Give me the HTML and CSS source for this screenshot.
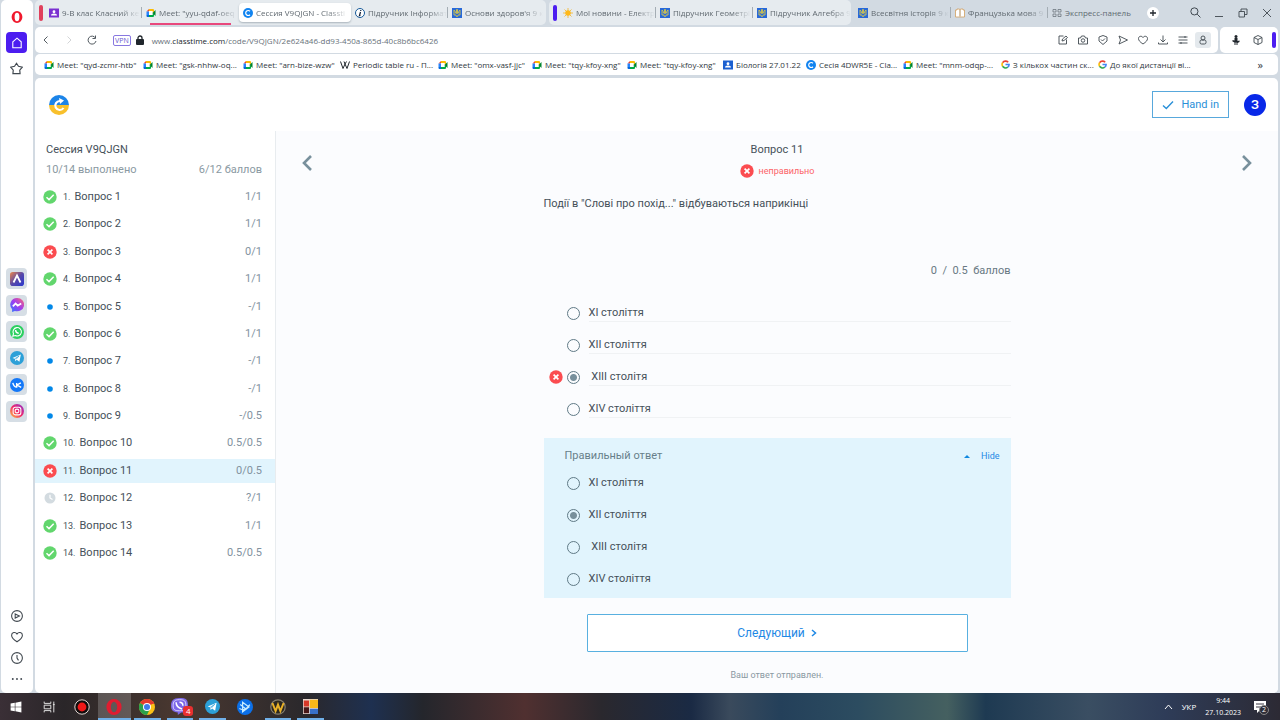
FILE: index.html
```html
<!DOCTYPE html>
<html lang="ru">
<head>
<meta charset="utf-8">
<title>Сессия V9QJGN - Classtime</title>
<link rel="stylesheet" href="styles.css">
</head>
<body>
<svg class="sprite" aria-hidden="true">
  <defs>
    <linearGradient id="g-msg" x1="0" y1="1" x2="1" y2="0"><stop offset="0" stop-color="#2a7bff"/><stop offset=".5" stop-color="#a03cf0"/><stop offset="1" stop-color="#ff6a70"/></linearGradient>
    <linearGradient id="g-insta" x1="0" y1="1" x2="1" y2="0"><stop offset="0" stop-color="#ffc83c"/><stop offset=".5" stop-color="#f0286c"/><stop offset="1" stop-color="#8a32d0"/></linearGradient>
    <linearGradient id="g-aria" x1="0" y1="0" x2="1" y2="1"><stop offset="0" stop-color="#f08848"/><stop offset=".5" stop-color="#5848a8"/><stop offset="1" stop-color="#2838d0"/></linearGradient>
  </defs>
  <symbol id="meet" viewBox="0 0 20 20"><path d="M1 7l5-5v5z" fill="#ea4335"/><path d="M6 2h8q2 0 2 2v4l-3 2V6H6z" fill="#fbbc04"/><path d="M1 7h5v7H1z" fill="#2684fc"/><path d="M1 14h5v4H3q-2 0-2-2z" fill="#0066da"/><path d="M6 14h7v-4l3 2v4q0 2-2 2H6z" fill="#00ac47"/><path d="M6 6h7v8H6z" fill="#fff"/><path d="M13 10l6-6v12z" fill="#00832d"/></symbol>
  <symbol id="trident" viewBox="0 0 20 20"><path d="M0 0h20v20H0z" fill="#2869d8"/><path d="M4 4v10h4q0 3 2 4 2-1 2-4h4V4q-3 2-3 6l-2 1V3L10 2 9 3v8l-2-1q0-4-3-6z" fill="none" stroke="#d4c44c" stroke-width="1.8"/></symbol>
  <symbol id="person" viewBox="0 0 20 20"><path d="M0 1h20v18H0z" fill="currentColor"/><circle cx="10" cy="7.500" r="2.800" fill="#fff"/><path d="M4 15q0-4 6-4t6 4z" fill="#fff"/></symbol>
  <symbol id="classtime" viewBox="0 0 20 20"><circle cx="10" cy="10" r="10" fill="#1284f0"/><path d="M14 6.500a5 5 0 1 0 0 7" fill="none" stroke="#fff" stroke-width="2.400"/></symbol>
  <symbol id="google" viewBox="0 0 20 20" fill="none" stroke-width="3.500"><path d="M16 5A8 8 0 0 0 3.500 6" stroke="#ea4335"/><path d="M3.500 6a8 8 0 0 0 0 8" stroke="#fbbc04"/><path d="M3.500 14a8 8 0 0 0 11.500 2" stroke="#34a853"/><path d="M15 16q3-2 3-6h-8" stroke="#4285f4"/></symbol>
  <symbol id="ok" viewBox="0 0 14 14"><circle cx="7" cy="7" r="6.700" fill="#62d66d"/><path d="M3.500 7.300l2.500 2.300 4.700-4.800" fill="none" stroke="#fff" stroke-width="1.500"/></symbol>
  <symbol id="bad" viewBox="0 0 14 14"><circle cx="7" cy="7" r="6.700" fill="#fb4c50"/><path d="M4.600 4.600l4.800 4.800M9.400 4.600L4.600 9.400" fill="none" stroke="#fff" stroke-width="1.700"/></symbol>
  <symbol id="dot" viewBox="0 0 14 14"><circle cx="7" cy="7" r="2.800" fill="#0288e8"/></symbol>
  <symbol id="wait" viewBox="0 0 14 14"><circle cx="7" cy="7" r="5.500" fill="#d3dbe0"/><path d="M7 3.800V7l2.500 1.500" fill="none" stroke="#fff" stroke-width="1.200"/></symbol>
  <symbol id="heart" viewBox="0 0 20 20"><path d="M10 18C4 14 1 11 1 7 1 2 7.500 1 10 5c2.500-4 9-3 9 2 0 4-3 7-9 11z"/></symbol>
  <symbol id="telegram" viewBox="0 0 20 20"><circle cx="10" cy="10" r="10" fill="#2ca0d8"/><path d="M3.500 10l12-5-2 10.500-4-3-2 2-.5-3.500z" fill="#fff"/><path d="M7 11l6-4-4.500 5" fill="none" stroke="#2ca0d8"/></symbol>
</svg>

<div class="browser">
  <nav class="dock" aria-label="Opera">
    <button class="dock-btn" aria-label="Opera"><svg width="12" height="12" viewBox="0 0 20 20"><path fill-rule="evenodd" d="M10 0a9 10 0 0 1 0 20a9 10 0 0 1 0-20zM10 3a4 7 0 0 0 0 14a4 7 0 0 0 0-14z" fill="#f0182c"/></svg></button>
    <button class="dock-btn dock-home" aria-label="Home"><svg class="line" width="12" height="12" viewBox="0 0 20 20"><path d="M3 8l7-6 7 6v10H3z"/></svg></button>
    <button class="dock-btn" aria-label="Pinboards"><svg class="line" width="13" height="13" viewBox="0 0 20 20"><path d="M10 2l3 4.500 6 1.500-4 4.500.5 5.500H4.500l.5-5.500L1 8l6-1.500z"/></svg></button>
    <div class="dock-apps">
      <button class="dock-btn dock-app" aria-label="Aria"><svg width="14" height="14" viewBox="0 0 20 20"><rect width="20" height="20" rx="4" fill="url(#g-aria)"/><path d="M5 15l5-10 5 10" fill="none" stroke="#fff" stroke-width="2.500"/></svg></button>
      <button class="dock-btn dock-app" aria-label="Messenger"><svg width="14" height="14" viewBox="0 0 20 20"><path d="M10 0a10 9.500 0 1 1-3 18.500L3 20v-4A9.500 9.500 0 0 1 10 0z" fill="url(#g-msg)"/><path d="M4 12l4-4 3 3 5-3" fill="none" stroke="#fff" stroke-width="2.500"/></svg></button>
      <button class="dock-btn dock-app" aria-label="WhatsApp"><svg width="14" height="14" viewBox="0 0 20 20"><circle cx="10" cy="10" r="10" fill="#2cd060"/><path d="M4 16l1-3.500A6 6 0 1 1 7.500 15z" fill="none" stroke="#fff" stroke-width="1.500"/><path d="M8 7q0 4 4.500 5" fill="none" stroke="#fff" stroke-width="2"/></svg></button>
      <button class="dock-btn dock-app" aria-label="Telegram"><svg width="14" height="14"><use href="#telegram"/></svg></button>
      <button class="dock-btn dock-app" aria-label="VK"><svg width="14" height="14" viewBox="0 0 20 20"><circle cx="10" cy="10" r="10" fill="#1478f8"/><path d="M4 7q1.500 6 5.500 6V7M15.500 7L10 10l6 3.500" fill="none" stroke="#fff" stroke-width="2"/></svg></button>
      <button class="dock-btn dock-app" aria-label="Instagram"><svg width="14" height="14" viewBox="0 0 20 20"><circle cx="10" cy="10" r="10" fill="url(#g-insta)"/><rect x="4.500" y="4.500" width="11" height="11" rx="3" fill="none" stroke="#fff" stroke-width="1.500"/><circle cx="10" cy="10" r="2.700" fill="none" stroke="#fff" stroke-width="1.500"/></svg></button>
    </div>
    <div class="dock-foot">
      <button class="dock-foot-btn" aria-label="Player"><svg class="line" width="12" height="12" viewBox="0 0 20 20"><circle cx="10" cy="10" r="9"/><path d="M7 6.500l7 3.500-7 3.500z"/></svg></button>
      <button class="dock-foot-btn" aria-label="Favorites"><svg class="line" width="12" height="12"><use href="#heart"/></svg></button>
      <button class="dock-foot-btn" aria-label="History"><svg class="line" width="12" height="12" viewBox="0 0 20 20"><circle cx="10" cy="10" r="9"/><path d="M10 5v5l2.500 4"/></svg></button>
      <button class="dock-foot-btn" aria-label="More"><svg width="12" height="12" viewBox="0 0 20 20" fill="#404850"><circle cx="3" cy="10" r="1.600"/><circle cx="10" cy="10" r="1.600"/><circle cx="17" cy="10" r="1.600"/></svg></button>
    </div>
  </nav>

  <div class="window">
    <div class="tabs">
      <div class="island">
        <span class="island-mark island-mark-red"></span>
        <button class="tab"><svg class="fav purple"><use href="#person"/></svg><span class="tab-name">9-В клас Класний ке</span></button>
        <button class="tab tab-alert"><svg class="fav"><use href="#meet"/></svg><span class="tab-name">Meet: "yyu-qdaf-oeq</span></button>
        <button class="tab tab-active"><svg class="fav"><use href="#classtime"/></svg><span class="tab-name">Сессия V9QJGN - Classti</span></button>
        <button class="tab"><svg class="fav" viewBox="0 0 20 20"><circle cx="10" cy="10" r="9" fill="#fff" stroke="#145898" stroke-width="2"/><path d="M11 8l-2 7 2-1M11.500 4v2" fill="none" stroke="#102038" stroke-width="2.500"/></svg><span class="tab-name">Підручник Інформат</span></button>
        <button class="tab tab-last"><svg class="fav"><use href="#trident"/></svg><span class="tab-name">Основи здоров'я 9 к</span></button>
      </div>
      <div class="island">
        <span class="island-mark island-mark-violet"></span>
        <button class="tab"><svg class="fav" viewBox="0 0 20 20"><path d="M10 0v20M0 10h20M3 3l14 14M17 3L3 17" stroke="#f0c050" stroke-width="2"/><circle cx="10" cy="10" r="5.500" fill="#ffb818"/></svg><span class="tab-name">Мої новини - Електр</span></button>
        <button class="tab"><svg class="fav"><use href="#trident"/></svg><span class="tab-name">Підручник Геометрі</span></button>
        <button class="tab tab-last"><svg class="fav"><use href="#trident"/></svg><span class="tab-name">Підручник Алгебра 9</span></button>
      </div>
      <div class="loose">
        <button class="tab"><svg class="fav"><use href="#trident"/></svg><span class="tab-name">Всесвітня історія 9 к</span></button>
        <button class="tab"><svg class="fav" viewBox="0 0 20 20"><path d="M1 4h3V2h5l1 2 1-2h5v2h3v14H1z" fill="#fff" stroke="#d0a060" stroke-width="1.600"/><path d="M10 4v13" stroke="#b08850" stroke-width="2"/></svg><span class="tab-name">Французька мова 9</span></button>
        <button class="tab tab-last"><svg class="fav" viewBox="0 0 20 20"><path d="M2 3h6v5H2zM12 3h6v5h-6zM2 12h6v5H2zM12 12h6v5h-6z" fill="none" stroke="#68727a" stroke-width="1.500"/></svg><span class="tab-name tab-whole">Экспресс-панель</span></button>
      </div>
      <button class="new-tab" aria-label="New tab"><svg width="8" height="8" viewBox="0 0 8 8"><path d="M4 1v6M1 4h6" stroke="#20262c" stroke-width="1.300"/></svg></button>
      <div class="win-controls">
        <button class="icon-btn" aria-label="Search"><svg class="line" width="11" height="11" viewBox="0 0 20 20"><circle cx="8" cy="8" r="6.500"/><path d="M13 13l6 6"/></svg></button>
        <button class="icon-btn" aria-label="Minimize"><svg class="line" width="10" height="11" viewBox="0 0 20 20"><path d="M2 18h16"/></svg></button>
        <button class="icon-btn" aria-label="Restore"><svg class="line" width="10" height="10" viewBox="0 0 20 20"><path d="M2 7h11v11H2zM6 7V2h12v11h-5"/></svg></button>
        <button class="icon-btn" aria-label="Close"><svg class="line" width="10" height="10" viewBox="0 0 20 20"><path d="M2 2l16 16M18 2L2 18"/></svg></button>
      </div>
    </div>

    <div class="toolbar">
      <div class="address">
        <button class="nav-btn" aria-label="Back"><svg class="line" width="10" height="10" viewBox="0 0 20 20"><path d="M13 3l-7 7 7 7"/></svg></button>
        <button class="nav-btn nav-off" aria-label="Forward"><svg class="line" width="10" height="10" viewBox="0 0 20 20"><path d="M7 3l7 7-7 7"/></svg></button>
        <button class="nav-btn" aria-label="Reload"><svg class="line" width="10" height="10" viewBox="0 0 20 20"><path d="M17 6A8 8 0 1 0 18 12M17 1v6h-6"/></svg></button>
        <span class="vpn">VPN</span>
        <svg width="8" height="10" viewBox="0 0 8 10"><path d="M2 5V3a2 2 0 0 1 4 0v2" fill="none" stroke="#20262c" stroke-width="1.300"/><rect y="4" width="8" height="6" rx="1" fill="#20262c"/></svg>
        <span class="url">www.<b>classtime.com</b>/code/V9QJGN/2e624a46-dd93-450a-865d-40c8b6bc6426</span>
        <div class="tools">
          <button class="tool" aria-label="Edit"><svg class="line" width="10" height="10" viewBox="0 0 20 20"><path d="M11 2H2v16h15V9M8 12l1-4 7-6 3 3-7 6z"/></svg></button>
          <button class="tool" aria-label="Snapshot"><svg class="line" width="10" height="10" viewBox="0 0 20 20"><path d="M1 6h4l2-4h6l2 4h4v12H1z"/><circle cx="10" cy="11" r="3.500"/></svg></button>
          <button class="tool" aria-label="Shield"><svg class="line" width="10" height="10" viewBox="0 0 20 20"><path d="M10 1l8 3v8l-8 7-8-7V4zM6 9l3 3 5-5"/></svg></button>
          <button class="tool" aria-label="Flow"><svg class="line" width="10" height="10" viewBox="0 0 20 20"><path d="M2 2l17 8-17 8 3-8z"/></svg></button>
          <button class="tool" aria-label="Favorite"><svg class="line" width="10" height="10"><use href="#heart"/></svg></button>
          <button class="tool" aria-label="Downloads"><svg class="line" width="10" height="10" viewBox="0 0 20 20"><path d="M10 1v12M5 9l5 5 5-5M1 15v3h18v-3"/></svg></button>
          <button class="tool" aria-label="Setup"><svg class="line" width="10" height="10" viewBox="0 0 20 20"><path d="M1 4h18M1 10h18M1 16h18M14 2v4M6 14v4"/></svg></button>
          <button class="tool tool-on" aria-label="Profile"><svg class="line" width="10" height="10" viewBox="0 0 20 20"><circle cx="10" cy="6" r="4"/><rect x="4" y="10" width="12" height="8" rx="3"/></svg></button>
        </div>
      </div>
      <div class="extensions">
        <button class="tool" aria-label="Assistant"><svg width="10" height="10" viewBox="0 0 20 20"><circle cx="10" cy="3" r="3" fill="#20262c"/><path d="M7 6h6v6l4-1v3l-4 2v4h-2v-5H9v5H7v-5l-4-2v-3l4 1z" fill="#20262c"/></svg></button>
        <button class="tool" aria-label="Extensions"><svg class="line" width="10" height="10" viewBox="0 0 20 20"><path d="M2 5l8-4 8 4v10l-8 4-8-4zM2 5l8 4 8-4M10 9v10"/></svg></button>
        <span class="ext-mark"></span>
      </div>
    </div>

    <div class="bookmarks">
      <a class="bm" href="#"><svg class="fav"><use href="#meet"/></svg>Meet: "qyd-zcmr-htb"</a>
      <a class="bm" href="#"><svg class="fav"><use href="#meet"/></svg>Meet: "gsk-nhhw-oq...</a>
      <a class="bm" href="#"><svg class="fav"><use href="#meet"/></svg>Meet: "arn-bize-wzw"</a>
      <a class="bm" href="#"><svg class="fav" viewBox="0 0 20 20"><path d="M1 3l5 14 4-9 4 9 5-14M8 3l2 5 3-5" fill="none" stroke="#20262c" stroke-width="2"/></svg>Periodic table ru - П...</a>
      <a class="bm" href="#"><svg class="fav"><use href="#meet"/></svg>Meet: "omx-vasf-jjc"</a>
      <a class="bm" href="#"><svg class="fav"><use href="#meet"/></svg>Meet: "tqy-kfoy-xng"</a>
      <a class="bm" href="#"><svg class="fav"><use href="#meet"/></svg>Meet: "tqy-kfoy-xng"</a>
      <a class="bm" href="#"><svg class="fav blue"><use href="#person"/></svg>Біологія 27.01.22</a>
      <a class="bm" href="#"><svg class="fav"><use href="#classtime"/></svg>Сесія 4DWR5E - Cla...</a>
      <a class="bm" href="#"><svg class="fav"><use href="#meet"/></svg>Meet: "mnm-odqp-...</a>
      <a class="bm" href="#"><svg class="fav fav-small" viewBox="0 0 20 20"><use href="#google"/></svg>З кількох частин ск...</a>
      <a class="bm" href="#"><svg class="fav fav-small" viewBox="0 0 20 20"><use href="#google"/></svg>До якої дистанції ві...</a>
      <button class="bm-more" aria-label="More bookmarks">»</button>
    </div>

    <div class="page">
      <header class="page-head">
        <svg width="20" height="20" viewBox="0 0 20 20" role="img" aria-label="Classtime"><path d="M0 10a10 10 0 0 1 20 0z" fill="#1c84e8"/><path d="M0 10a10 10 0 0 0 20 0z" fill="#f8c02c"/><path d="M11 6a4.500 4.500 0 1 0 3.500 7" fill="none" stroke="#fff" stroke-width="2.200"/><path d="M10 3l5 2.500-4 3.500z" fill="#fff"/></svg>
        <div class="head-actions">
          <button class="hand-in"><svg width="12" height="10" viewBox="0 0 12 10"><path d="M1 5.500l3.300 3L11 1.500" fill="none" stroke="#2a90d8" stroke-width="1.400"/></svg>Hand in</button>
          <button class="avatar">З</button>
        </div>
      </header>
      <div class="page-body">
        <aside class="session">
          <h1 class="session-title">Сессия V9QJGN</h1>
          <p class="session-sum"><span>10/14 выполнено</span><span>6/12 баллов</span></p>
          <ol class="questions">
            <li><a class="q" href="#"><svg class="mark"><use href="#ok"/></svg><span class="num">1.</span>Вопрос 1<span class="pts">1/1</span></a></li>
            <li><a class="q" href="#"><svg class="mark"><use href="#ok"/></svg><span class="num">2.</span>Вопрос 2<span class="pts">1/1</span></a></li>
            <li><a class="q" href="#"><svg class="mark"><use href="#bad"/></svg><span class="num">3.</span>Вопрос 3<span class="pts">0/1</span></a></li>
            <li><a class="q" href="#"><svg class="mark"><use href="#ok"/></svg><span class="num">4.</span>Вопрос 4<span class="pts">1/1</span></a></li>
            <li><a class="q" href="#"><svg class="mark"><use href="#dot"/></svg><span class="num">5.</span>Вопрос 5<span class="pts">-/1</span></a></li>
            <li><a class="q" href="#"><svg class="mark"><use href="#ok"/></svg><span class="num">6.</span>Вопрос 6<span class="pts">1/1</span></a></li>
            <li><a class="q" href="#"><svg class="mark"><use href="#dot"/></svg><span class="num">7.</span>Вопрос 7<span class="pts">-/1</span></a></li>
            <li><a class="q" href="#"><svg class="mark"><use href="#dot"/></svg><span class="num">8.</span>Вопрос 8<span class="pts">-/1</span></a></li>
            <li><a class="q" href="#"><svg class="mark"><use href="#dot"/></svg><span class="num">9.</span>Вопрос 9<span class="pts">-/0.5</span></a></li>
            <li><a class="q" href="#"><svg class="mark"><use href="#ok"/></svg><span class="num">10.</span>Вопрос 10<span class="pts">0.5/0.5</span></a></li>
            <li><a class="q q-current" href="#"><svg class="mark"><use href="#bad"/></svg><span class="num">11.</span>Вопрос 11<span class="pts">0/0.5</span></a></li>
            <li><a class="q" href="#"><svg class="mark"><use href="#wait"/></svg><span class="num">12.</span>Вопрос 12<span class="pts">?/1</span></a></li>
            <li><a class="q" href="#"><svg class="mark"><use href="#ok"/></svg><span class="num">13.</span>Вопрос 13<span class="pts">1/1</span></a></li>
            <li><a class="q" href="#"><svg class="mark"><use href="#ok"/></svg><span class="num">14.</span>Вопрос 14<span class="pts">0.5/0.5</span></a></li>
          </ol>
        </aside>
        <main class="main">
          <button class="step" aria-label="Предыдущий"><svg width="12" height="16" viewBox="0 0 12 16"><path d="M10 1L3 8l7 7" fill="none" stroke="#78909c" stroke-width="2.600"/></svg></button>
          <div class="content">
            <h2 class="title">Вопрос 11</h2>
            <p class="status"><svg class="mark"><use href="#bad"/></svg>неправильно</p>
            <p class="prompt">Події в "Слові про похід..." відбуваються наприкінці</p>
            <p class="score">0&nbsp; /&nbsp; 0.5&nbsp; баллов</p>
            <div class="options options-lined">
              <div class="option"><span></span><input type="radio" name="a" id="a1"><label for="a1">XI століття</label></div>
              <div class="option"><span></span><input type="radio" name="a" id="a2"><label for="a2">XII століття</label></div>
              <div class="option"><svg class="mark"><use href="#bad"/></svg><input type="radio" name="a" id="a3" checked><label for="a3">&nbsp;XIII столітя</label></div>
              <div class="option"><span></span><input type="radio" name="a" id="a4"><label for="a4">XIV століття</label></div>
            </div>
            <section class="answer">
              <div class="answer-head"><h3 class="answer-title">Правильный ответ</h3><button class="hide"><svg width="6" height="3" viewBox="0 0 6 3"><path d="M0 3l3-3 3 3z" fill="#1088e0"/></svg>Hide</button></div>
              <div class="options">
                <div class="option"><span></span><input type="radio" name="b" id="b1"><label for="b1">XI століття</label></div>
                <div class="option"><span></span><input type="radio" name="b" id="b2" checked><label for="b2">XII століття</label></div>
                <div class="option"><span></span><input type="radio" name="b" id="b3"><label for="b3">&nbsp;XIII столітя</label></div>
                <div class="option"><span></span><input type="radio" name="b" id="b4"><label for="b4">XIV століття</label></div>
              </div>
            </section>
            <button class="next">Следующий<svg width="6" height="8" viewBox="0 0 6 8"><path d="M1 1l3.500 3L1 7" fill="none" stroke="#1e88e5" stroke-width="1.500"/></svg></button>
            <p class="sent">Ваш ответ отправлен.</p>
          </div>
          <button class="step" aria-label="Следующий вопрос"><svg width="12" height="16" viewBox="0 0 12 16"><path d="M2 1l7 7-7 7" fill="none" stroke="#78909c" stroke-width="2.600"/></svg></button>
        </main>
      </div>
    </div>
  </div>
</div>

<footer class="taskbar">
  <div class="task-apps">
    <button class="task" aria-label="Start"><svg width="12" height="12" viewBox="0 0 20 20"><path d="M1 4l7-1v6.500H1zM9 2.800L19 1v8.500H9zM1 10.500h7V17l-7-1zM9 10.500h10V19L9 17.200z" fill="#fff"/></svg></button>
    <button class="task" aria-label="Task view"><svg width="12" height="12" viewBox="0 0 20 20" fill="none" stroke="#e4e4e4" stroke-width="1.600"><path d="M2 1v3h11V1M2 7h11v6H2zM2 19v-3h11v3M18 1v18M16.500 6h3"/></svg></button>
    <button class="task" aria-label="Recorder"><svg width="16" height="16" viewBox="0 0 20 20"><circle cx="10" cy="10" r="9" fill="#100c0c" stroke="#e8dcd8" stroke-width="1.200"/><circle cx="10" cy="10" r="5.500" fill="#f01818"/></svg></button>
    <button class="task task-open task-front" aria-label="Opera"><svg width="16" height="16" viewBox="0 0 20 20"><path fill-rule="evenodd" d="M10 0a9.500 10 0 0 1 0 20a9.500 10 0 0 1 0-20zM10 3.500a4 6.500 0 0 0 0 13a4 6.500 0 0 0 0-13z" fill="#e01c30"/></svg></button>
    <button class="task task-open" aria-label="Chrome"><svg width="16" height="16" viewBox="0 0 20 20"><circle cx="10" cy="10" r="10" fill="#fbc116"/><path d="M10 10L1.300 5a10 10 0 0 1 17.400 0z" fill="#e33b2e"/><path d="M10 10L1.300 5A10 10 0 0 0 10 20l4-8z" fill="#2ba24c"/><path d="M10 5h8.700" stroke="#e33b2e" stroke-width="2"/><circle cx="10" cy="10" r="5" fill="#fff"/><circle cx="10" cy="10" r="3.800" fill="#3f7ce8"/></svg></button>
    <button class="task task-open" aria-label="Viber"><svg width="17" height="17" viewBox="0 0 20 20"><path d="M10 0c8 0 10 2 10 9s-3 8-8 8l-4 3v-3C2 16 0 14 0 9s2-9 10-9z" fill="#7d68e8"/><path d="M10 2c6 0 7.500 1.500 7.500 7s-2 6-7.500 6-7.500-1-7.500-6S4 2 10 2z" fill="none" stroke="#e8e4ff"/><path d="M6 5q0 6 7 8M10 5q4 0 4 4" fill="none" stroke="#fff" stroke-width="1.800"/></svg><span class="badge">4</span></button>
    <button class="task task-open" aria-label="Telegram"><svg width="15" height="15"><use href="#telegram"/></svg></button>
    <button class="task" aria-label="Battle.net"><svg width="16" height="16" viewBox="0 0 20 20"><circle cx="10" cy="10" r="10" fill="#0c70e8"/><path d="M7 4l8 6-8 6zM4 7l8 6M3 12q7 4 13-5" fill="none" stroke="#c8ecff" stroke-width="1.500"/></svg></button>
    <button class="task task-open" aria-label="World of Warcraft"><svg width="16" height="16" viewBox="0 0 20 20"><circle cx="10" cy="10" r="9" fill="#2c2820" stroke="#888070" stroke-width="1.500"/><path d="M3 5l4 10 3-8 3 8 4-10" fill="none" stroke="#e8b028" stroke-width="2.500"/></svg></button>
    <button class="task task-open" aria-label="Pictures"><svg width="15" height="15" viewBox="0 0 20 20"><path d="M0 0h20v20H0z" fill="#e8d8d0"/><path d="M1 2h7v8H1z" fill="#d83828"/><path d="M1 11h7v8H1z" fill="#481818"/><path d="M9 1h11v11H9z" fill="#f8b818"/><path d="M9 13h11v7H9z" fill="#3870c8"/></svg></button>
  </div>
  <div class="tray">
    <button class="tray-btn" aria-label="Tray"><svg width="9" height="6" viewBox="0 0 9 6"><path d="M1 5l3.500-4L8 5" fill="none" stroke="#fff"/></svg></button>
    <span>УКР</span>
    <time class="clock">9:44<br>27.10.2023</time>
    <button class="tray-btn tray-notes" aria-label="Notifications"><svg width="12" height="12" viewBox="0 0 12 12"><path d="M0 0h12v9H6l-3 3V9H0z" fill="#fff"/><path d="M2 3h8M2 6h8" stroke="#3a3844"/></svg><span class="count">2</span></button>
  </div>
</footer>
</body>
</html>
```
FILE: styles.css
```css
* { box-sizing: border-box; }
body {
  margin: 0;
  height: 100vh;
  display: flex;
  flex-direction: column;
  overflow: hidden;
  background: #d2dae2;
  color: #455059;
  font-family: "Open Sans", "Noto Sans", sans-serif;
  font-size: 8px;
}
button {
  border: 0;
  padding: 0;
  background: none;
  font: inherit;
  color: inherit;
  cursor: pointer;
}
a { color: inherit; text-decoration: none; }
h1, h2, h3, p, ol { margin: 0; padding: 0; font-weight: 400; }
svg { display: block; flex: none; }
.sprite { position: absolute; width: 0; height: 0; }
.line { fill: none; stroke: #40484f; stroke-width: 1.8; }

.browser { flex: 1; min-height: 0; display: flex; gap: 2px; padding: 0 2px 0 1px; }

/* Side dock */
.dock {
  width: 32px;
  padding: 6px 6px 6px 5px;
  display: flex;
  flex-direction: column;
  align-items: flex-start;
  gap: 5px;
  background: #fff;
  border-radius: 5px;
}
.dock-btn { width: 21px; height: 21px; display: grid; place-items: center; border-radius: 4px; }
.dock-home { background: #4c1df0; }
.dock-home .line { stroke: #fff; }
.dock-apps {
  height: 154px;
  margin: 184px 0 auto;
  display: flex;
  flex-direction: column;
  justify-content: space-between;
}
.dock-app { background: #d6dee5; }
.dock-foot { display: flex; flex-direction: column; gap: 5px; }
.dock-foot-btn { width: 21px; height: 16px; display: grid; place-items: center; }

.window { flex: 1; min-width: 0; display: flex; flex-direction: column; gap: 2px; }

/* Tabs */
.tabs { height: 25px; display: flex; align-items: center; color: #606970; }
.island {
  height: 25px;
  display: flex;
  align-items: center;
  margin-right: 3px;
  padding: 0 1px 0 4px;
  background: #e6ebef;
  border-radius: 5px;
}
.island-mark { width: 4px; height: 16px; margin-right: 2px; border-radius: 2px; }
.island-mark-red { background: #e0405c; }
.island-mark-violet { background: #4c1df0; }
.loose { display: flex; align-items: center; }
.tab {
  position: relative;
  width: 97px;
  height: 19px;
  padding: 0 2px 0 4px;
  display: flex;
  align-items: center;
  gap: 3px;
  text-align: left;
}
.tab::after {
  content: "";
  position: absolute;
  right: 0;
  top: 4px;
  height: 11px;
  border-right: 1px solid #a4adb4;
}
.tab-last::after, .tab-active::after { display: none; }
.tab-alert::after {
  left: 8px;
  right: 8px;
  top: 20px;
  height: 2px;
  border: 0;
  background: #e8487c;
}
.tab-active { width: 112px; background: #fff; border-radius: 4px; box-shadow: 0 1px 2px #a8b2ba; }
.tab-name {
  flex: 1;
  white-space: nowrap;
  mask-image: linear-gradient(to right, #000 75%, transparent);
}
.tab-whole { mask-image: none; }
.fav { width: 10px; height: 10px; }
.fav-small { width: 9px; height: 9px; }
.purple { color: #7a30d0; }
.blue { color: #1c60d0; }
.new-tab {
  width: 12px;
  height: 12px;
  margin-left: 2px;
  display: grid;
  place-items: center;
  background: #fff;
  border-radius: 50%;
}
.win-controls { margin-left: auto; display: flex; gap: 14px; padding-right: 6px; }
.icon-btn { width: 10px; height: 12px; display: grid; place-items: center; }

/* Address bar */
.toolbar { height: 26px; display: flex; gap: 2px; }
.address, .extensions { display: flex; align-items: center; background: #fff; border-radius: 5px; }
.address { flex: 1; padding: 0 7px 0 6px; }
.nav-btn { width: 10px; height: 16px; margin-right: 13px; display: grid; place-items: center; }
.nav-off { opacity: .25; }
.vpn {
  height: 11px;
  margin: 0 5px 0 3px;
  padding: 0 1px;
  border: 1px solid #8878e0;
  border-radius: 2px;
  color: #6858d0;
  font-size: 7px;
  line-height: 9px;
}
.url { margin-left: 8px; color: #68727a; }
.url b { font-weight: 400; color: #20262c; }
.tools { margin-left: auto; display: flex; gap: 4px; }
.tool { width: 16px; height: 16px; display: grid; place-items: center; border-radius: 3px; }
.tool-on { background: #e4e9ed; }
.extensions { width: 58px; padding: 0 2px 0 8px; gap: 6px; }
.ext-mark { width: 4px; height: 16px; margin-left: auto; border-radius: 2px; background: #4c1df0; }

/* Bookmarks */
.bookmarks {
  height: 21px;
  margin-top: -1px;
  padding: 0 15px 0 9px;
  display: grid;
  grid-template-columns: 99px 100px 97px 98px 94px 95px 96px 83px 97px 98px 97px 1fr auto;
  align-items: center;
  background: #fff;
  border-radius: 5px;
  color: #303840;
}
.bm { display: flex; align-items: center; gap: 3px; white-space: nowrap; }
.bm-more { font-size: 11px; line-height: 14px; }

/* Page */
.page {
  flex: 1;
  min-height: 0;
  margin-top: 1px;
  display: flex;
  flex-direction: column;
  overflow: hidden;
  background: #fff;
  border-radius: 5px;
  color: #455059;
  font-family: Roboto, sans-serif;
  font-size: 11px;
  line-height: 16px;
}
.page-head { height: 53px; padding: 0 12px 0 14px; display: flex; align-items: center; justify-content: space-between; }
.head-actions { display: flex; align-items: center; gap: 15px; }
.hand-in {
  height: 27px;
  padding: 0 9px;
  display: flex;
  align-items: center;
  gap: 7px;
  border: 1px solid #58a8dc;
  background: #fff;
  color: #2a90d8;
}
.avatar {
  width: 22px;
  height: 22px;
  border-radius: 50%;
  background: #0828e8;
  color: #fff;
  font-size: 13px;
  font-weight: 500;
  line-height: 22px;
}
.page-body { flex: 1; min-height: 0; display: flex; }
.session { width: 241px; padding-top: 11px; border-right: 1px solid #e8ecef; }
.session-title { padding-left: 11px; font-size: 11px; }
.session-sum { margin-top: 4px; padding: 0 13px 0 11px; display: flex; justify-content: space-between; color: #8a99a2; }
.questions {
  height: 380px;
  margin-top: 7px;
  display: flex;
  flex-direction: column;
  justify-content: space-between;
  list-style: none;
}
.q { height: 24px; padding: 0 13px 0 8px; display: flex; align-items: center; }
.q-current { background: #e1f4fd; }
.mark { width: 14px; height: 14px; }
.num { margin: 0 4px 0 6px; font-size: 9px; }
.pts { margin-left: auto; color: #8292a0; }

.main {
  flex: 1;
  padding: 11px 25px;
  display: flex;
  align-items: flex-start;
  justify-content: space-between;
  background: #fbfcfe;
}
.step { margin-top: 13px; }
.content { width: 467px; }
.title { font-size: 11px; text-align: center; }
.status {
  margin-top: 5px;
  display: flex;
  align-items: center;
  justify-content: center;
  gap: 5px;
  color: #fb6468;
  font-size: 9px;
}
.prompt { min-height: 67px; margin-top: 17px; }
.score { text-align: right; color: #687882; }
.options { padding-left: 5px; }
.options-lined { margin-top: 18px; }
.option {
  height: 32px;
  display: grid;
  grid-template-columns: 14px 13px 1fr;
  column-gap: 4px;
  align-items: center;
}
.option input {
  appearance: none;
  width: 13px;
  height: 13px;
  margin: 0;
  border: 1px solid #607a86;
  border-radius: 50%;
}
.option input:checked { background: radial-gradient(circle, #78909c 3px, transparent 4px); }
.option label { margin-left: 5px; border-bottom: 1px solid transparent; }
.options-lined label { border-color: #f0f2f4; }
.answer { margin-top: 13px; padding: 7px 0 3px; background: #e1f4fd; }
.answer-head { height: 22px; padding: 0 11px 0 21px; display: flex; align-items: center; justify-content: space-between; }
.answer-title { color: #687f8a; font-size: 11px; }
.hide { display: flex; align-items: center; gap: 11px; color: #1e88e5; font-size: 9px; }
.next {
  width: 381px;
  height: 38px;
  margin: 16px auto 0;
  display: flex;
  align-items: center;
  justify-content: center;
  gap: 6px;
  border: 1px solid #58b0e0;
  border-radius: 1px;
  background: #fff;
  color: #1e88e5;
  font-size: 12px;
}
.sent { margin-top: 15px; text-align: center; color: #8a99a2; font-size: 9px; }

/* Taskbar */
.taskbar {
  height: 27px;
  display: flex;
  justify-content: space-between;
  color: #fff;
  background: linear-gradient(to right, #3a2f36, #2a2629 5%, #4a3830 14%, #2a282c 24%, #1e3050 29%, #24262c 33%, #503030 41%, #2a282e 47%, #1a2a44 54%, #3a4a5c 57%, #24405a 61%, #2c4c60 67%, #456060 74%, #1e3a52 77%, #3a4e62 85%, #2e3c58 91%, #2c2a34);
}
.task-apps { width: 327px; display: flex; }
.task { position: relative; flex: 1; display: grid; place-items: center; }
.task-front { background: rgba(255, 255, 255, .2); }
.task-open::after {
  content: "";
  position: absolute;
  left: 3px;
  right: 3px;
  bottom: 0;
  height: 2px;
  background: #70b0e8;
}
.task-front::after { left: 0; right: 0; }
.badge {
  position: absolute;
  right: 3px;
  bottom: 4px;
  width: 10px;
  height: 10px;
  border-radius: 3px;
  background: #e83030;
  font-size: 8px;
  line-height: 10px;
}
.tray { display: flex; align-items: center; gap: 9px; padding-right: 14px; }
.tray-btn { position: relative; }
.clock { text-align: center; font-size: 7px; line-height: 12px; }
.tray-notes { margin-left: 4px; }
.count {
  position: absolute;
  left: 5px;
  top: 4px;
  width: 10px;
  height: 10px;
  border: 1px solid #888;
  border-radius: 50%;
  background: #302e38;
  font-size: 7px;
  line-height: 8px;
}
```
